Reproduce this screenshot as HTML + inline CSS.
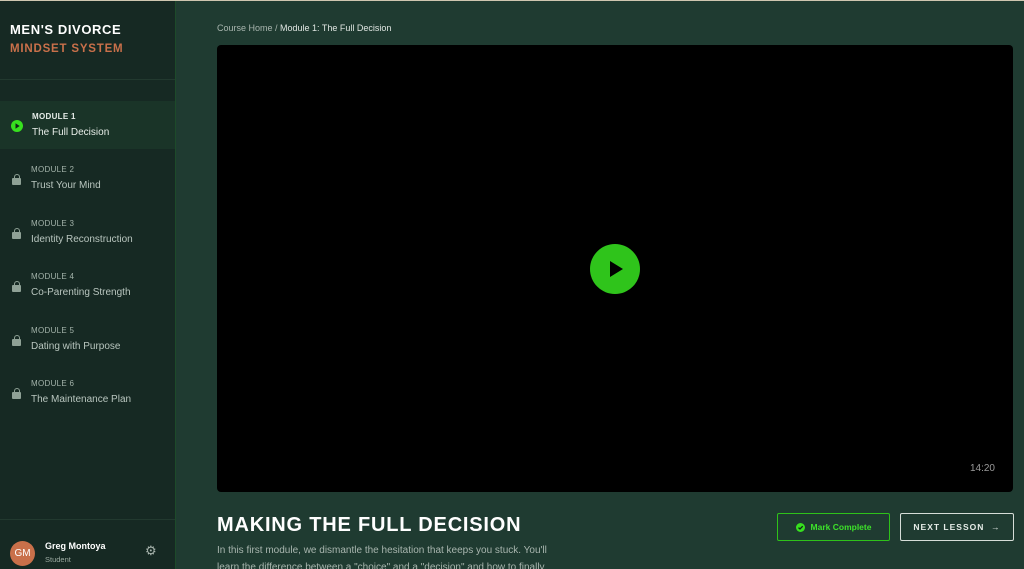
<!DOCTYPE html>
<html><head><meta charset="utf-8"><style>
*{margin:0;padding:0;box-sizing:border-box}
html,body{width:1024px;height:569px;overflow:hidden;font-family:"Liberation Sans",sans-serif}
body{background:#1f3b31;position:relative}
.topl{position:absolute;left:0;top:0;width:1024px;height:1px;background:#cfc6b0;z-index:5}
.sb{position:absolute;left:0;top:0;width:176px;height:569px;background:#162923;border-right:1px solid #1d4a2a}
.brand{padding:22px 10px 0;height:80px;border-bottom:1px solid #22392f}
.b1{color:#fff;font-weight:bold;font-size:13px;letter-spacing:.6px}
.b2{color:#c9704a;font-weight:bold;font-size:11.5px;letter-spacing:.8px;margin-top:6px}
.mod{position:absolute;left:0;width:175px;height:48px}
.mod.act{background:#1a3428}
.mod .l{position:absolute;left:31px;top:11px;font-size:8px;color:#a3b3aa;letter-spacing:.3px}
.mod .t{position:absolute;left:31px;top:26px;font-size:10px;color:#b9c6bf}
.mod.act .l{color:#e6ece8;left:32px;font-weight:bold}.mod.act .t{color:#e8eee9;left:32px}
.lock{position:absolute;left:12px;top:24px;width:9px;height:7px;background:#8fa196;border-radius:1px}
.lock:before{content:"";position:absolute;left:1.5px;top:-4px;width:6px;height:6px;border:1.5px solid #8fa196;border-bottom:none;border-radius:3px 3px 0 0;box-sizing:border-box}
.foot{position:absolute;left:0;bottom:0;width:175px;height:50px;border-top:1px solid #22392f}
.av{position:absolute;left:10px;top:21px;width:25px;height:25px;border-radius:50%;background:#c9704a;color:#fff;font-size:10px;line-height:25px;text-align:center}
.crumb{position:absolute;left:217px;top:23px;font-size:9px;color:#e0e6e2}
.vid{position:absolute;left:217px;top:45px;width:796px;height:447px;background:#000;border-radius:4px}
.play{position:absolute;left:373px;top:199px;width:50px;height:50px;border-radius:50%;background:#2fc41b}
.time{position:absolute;right:18px;bottom:18px;color:#9a9a9a;font-size:10px}
h1{position:absolute;left:217px;top:514px;color:#fff;font-size:20px;letter-spacing:.8px;font-weight:bold}
.desc{position:absolute;left:217px;top:542px;width:352px;font-size:10px;line-height:17px;color:#a9b6af}
.btn{position:absolute;top:513px;height:28px;border-radius:2px;font-size:8.5px;font-weight:bold;line-height:26px;text-align:center}
.mc{left:777px;width:113px;border:1px solid #2ec21a;color:#3de22a}
.nl{left:900px;width:114px;border:1.5px solid #d6ddd8;color:#e6ece8;letter-spacing:1px}
</style></head><body>
<div class="topl"></div>
<div class="sb">
<div class="brand"><div class="b1">MEN'S DIVORCE</div><div class="b2">MINDSET SYSTEM</div></div>
<div class="mod act" style="top:101px"><svg style="position:absolute;left:11px;top:19px" width="12" height="12"><circle cx="6" cy="6" r="6" fill="#37e01f"/><path d="M4.5 3.3L8.7 6 4.5 8.7Z" fill="#10231a"/></svg><div class="l">MODULE 1</div><div class="t">The Full Decision</div></div>
<div class="mod" style="top:154px"><div class="lock"></div><div class="l">MODULE 2</div><div class="t">Trust Your Mind</div></div>
<div class="mod" style="top:208px"><div class="lock"></div><div class="l">MODULE 3</div><div class="t">Identity Reconstruction</div></div>
<div class="mod" style="top:261px"><div class="lock"></div><div class="l">MODULE 4</div><div class="t">Co-Parenting Strength</div></div>
<div class="mod" style="top:315px"><div class="lock"></div><div class="l">MODULE 5</div><div class="t">Dating with Purpose</div></div>
<div class="mod" style="top:368px"><div class="lock"></div><div class="l">MODULE 6</div><div class="t">The Maintenance Plan</div></div>
<div class="foot"><div class="av">GM</div>
<div style="position:absolute;left:45px;top:21px;color:#fff;font-size:9px;font-weight:bold">Greg Montoya</div>
<div style="position:absolute;left:45px;top:35px;color:#9aa9a0;font-size:7.5px">Student</div>
<div style="position:absolute;left:145px;top:23px;color:#a8b4ad;font-size:13px">⚙</div></div>
</div>
<div class="crumb"><span style="color:#a9b6af">Course Home /</span> Module 1: The Full Decision</div>
<div class="vid"><div class="play"><svg width="50" height="50"><path d="M20 17L33 25 20 33Z" fill="#000"/></svg></div><div class="time">14:20</div></div>
<h1>MAKING THE FULL DECISION</h1>
<div class="desc">In this first module, we dismantle the hesitation that keeps you stuck. You'll learn the difference between a "choice" and a "decision" and how to finally</div>
<div class="btn mc"><svg style="vertical-align:-2px;margin-right:6px" width="9" height="9"><circle cx="4.5" cy="4.5" r="4.5" fill="#37e01f"/><path d="M2.5 4.6L4 6 6.7 3.2" stroke="#10231a" stroke-width="1.3" fill="none"/></svg>Mark Complete</div>
<div class="btn nl">NEXT LESSON &nbsp;→</div>
</body></html>
